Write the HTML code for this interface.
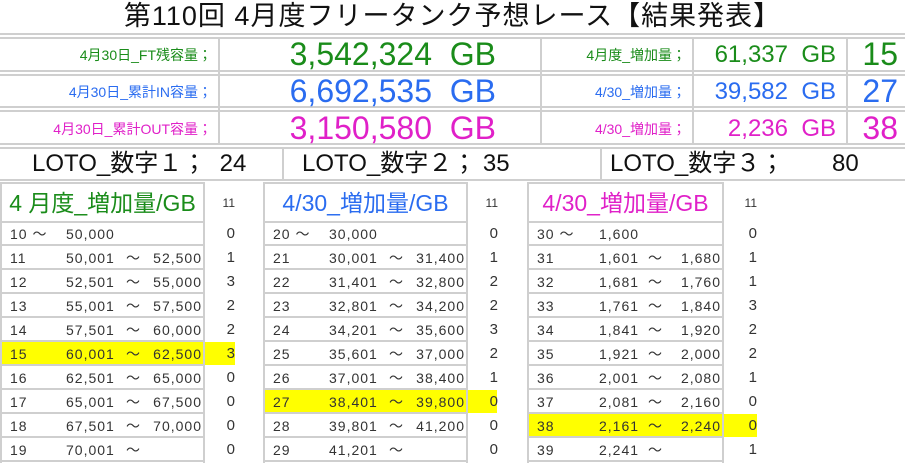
<!DOCTYPE html><html><head><meta charset="utf-8"><style>
body{margin:0;width:905px;height:463px;background:#fff;position:relative;overflow:hidden;font-family:"Liberation Sans","Noto Sans CJK JP",sans-serif;}
div{position:absolute;box-sizing:border-box;white-space:nowrap}
.h{left:0;width:905px;height:0;border-top:2px solid #cfcfcf}
.v{width:0;border-left:2px solid #cfcfcf}
.g{color:#1a8c1a}.b{color:#2a6cf0}.m{color:#e020c8}
.lab{font-size:14px;text-align:right;line-height:20px}
.big{font-size:32px;text-align:right;line-height:36px}
.mid{font-size:24px;text-align:right;line-height:30px}
.t{border:2px solid #cfcfcf;border-bottom:none;background:#fff}
.row{height:24px;border-bottom:2px solid #cfcfcf;font-size:14px;color:#333;line-height:24px;letter-spacing:1px}
.row span{position:absolute}
.cnt{font-size:15px;color:#333;text-align:right;width:20px;height:24px;line-height:24px}
.y{background:#ffff00}
.lo{top:147px;font-size:24px;color:#111;line-height:34px}
</style></head><body>
<div style="left:0;top:0;width:905px;height:33px;text-align:center;font-size:27px;line-height:33px;color:#111;letter-spacing:1px">第110回 4月度フリータンク予想レース【結果発表】</div>
<div class="h" style="top:33px"></div><div class="h" style="top:37px"></div>
<div class="h" style="top:70px"></div><div class="h" style="top:74px"></div>
<div class="h" style="top:106px"></div><div class="h" style="top:110px"></div>
<div class="h" style="top:143px"></div><div class="h" style="top:147px"></div>
<div class="h" style="top:179px"></div>
<div class="v" style="left:218px;top:37px;height:106px"></div>
<div class="v" style="left:540px;top:37px;height:106px"></div>
<div class="v" style="left:692px;top:37px;height:106px"></div>
<div class="v" style="left:846px;top:37px;height:106px"></div>
<div class="v" style="left:282px;top:147px;height:32px"></div>
<div class="v" style="left:600px;top:147px;height:32px"></div>

<div class="lab g" style="left:0;width:212px;top:45px">4月30日_FT残容量；</div>
<div class="big g" style="left:220px;width:276px;top:36px">3,542,324&nbsp; GB</div>
<div class="lab g" style="left:542px;width:144px;top:45px">4月度_増加量；</div>
<div class="mid g" style="left:694px;width:142px;top:40px">61,337&nbsp; GB</div>
<div class="big g" style="left:848px;width:50px;top:36px">15</div>

<div class="lab b" style="left:0;width:212px;top:82px">4月30日_累計IN容量；</div>
<div class="big b" style="left:220px;width:276px;top:73px">6,692,535&nbsp; GB</div>
<div class="lab b" style="left:542px;width:144px;top:82px">4/30_増加量；</div>
<div class="mid b" style="left:694px;width:142px;top:77px">39,582&nbsp; GB</div>
<div class="big b" style="left:848px;width:50px;top:73px">27</div>

<div class="lab m" style="left:0;width:212px;top:119px">4月30日_累計OUT容量；</div>
<div class="big m" style="left:220px;width:276px;top:110px">3,150,580&nbsp; GB</div>
<div class="lab m" style="left:542px;width:144px;top:119px">4/30_増加量；</div>
<div class="mid m" style="left:694px;width:142px;top:114px">2,236&nbsp; GB</div>
<div class="big m" style="left:848px;width:50px;top:110px">38</div>

<div class="lo" style="left:32px">LOTO_数字１；&nbsp; 24</div>
<div class="lo" style="left:302px">LOTO_数字２；&nbsp;35</div>
<div class="lo" style="left:610px">LOTO_数字３；</div>
<div class="lo" style="left:832px">80</div>

<div id="tables"></div>
<script>
const T=[
{x:0,w:205,cx:215,yw:235,c:'g',h:'4 月度_増加量/GB',hl:5,a:64,tl:124,
 r:[['10 ～','50,000',''],['11','50,001','52,500'],['12','52,501','55,000'],['13','55,001','57,500'],['14','57,501','60,000'],['15','60,001','62,500'],['16','62,501','65,000'],['17','65,001','67,500'],['18','67,501','70,000'],['19','70,001','']],
 n:[0,1,3,2,2,3,0,0,0,0]},
{x:263,w:205,cx:478,yw:497,c:'b',h:'4/30_増加量/GB',hl:7,a:64,tl:124,
 r:[['20 ～','30,000',''],['21','30,001','31,400'],['22','31,401','32,800'],['23','32,801','34,200'],['24','34,201','35,600'],['25','35,601','37,000'],['26','37,001','38,400'],['27','38,401','39,800'],['28','39,801','41,200'],['29','41,201','']],
 n:[0,1,2,2,3,2,1,0,0,0]},
{x:527,w:197,cx:737,yw:757,c:'m',h:'4/30_増加量/GB',hl:8,a:70,tl:119,
 r:[['30 ～','1,600',''],['31','1,601','1,680'],['32','1,681','1,760'],['33','1,761','1,840'],['34','1,841','1,920'],['35','1,921','2,000'],['36','2,001','2,080'],['37','2,081','2,160'],['38','2,161','2,240'],['39','2,241','']],
 n:[0,1,1,3,2,2,1,0,0,1]}];
let s='';
for(const t of T){
 s+=`<div class="t" style="left:${t.x}px;top:182px;width:${t.w}px;height:281px"></div>`;
 s+=`<div class="${t.c}" style="left:${t.x}px;top:183px;width:${t.w}px;height:40px;line-height:40px;text-align:center;font-size:23px;border-bottom:2px solid #cfcfcf">${t.h}</div>`;
 s+=`<div class="cnt" style="left:${t.cx}px;top:191px;font-size:12px">11</div>`;
 t.r.forEach((r,i)=>{const y=222+i*24;
  if(i==t.hl)s+=`<div class="y" style="left:${t.x}px;top:${y}px;width:${t.yw-t.x}px;height:23px"></div>`;
  const tl=(i>0)?`<span style="left:${t.tl}px">～</span>`:'';
  s+=`<div class="row" style="left:${t.x}px;top:${y}px;width:${t.w}px;border-left:2px solid #cfcfcf;border-right:2px solid #cfcfcf"><span style="left:8px">${r[0]}</span><span style="left:${t.a}px">${r[1]}</span>${tl}<span style="right:1px">${r[2]}</span></div>`;
  s+=`<div class="cnt" style="left:${t.cx}px;top:${y}px">${t.n[i]}</div>`;
 });
}
document.getElementById('tables').outerHTML=s;
</script>
</body></html>
